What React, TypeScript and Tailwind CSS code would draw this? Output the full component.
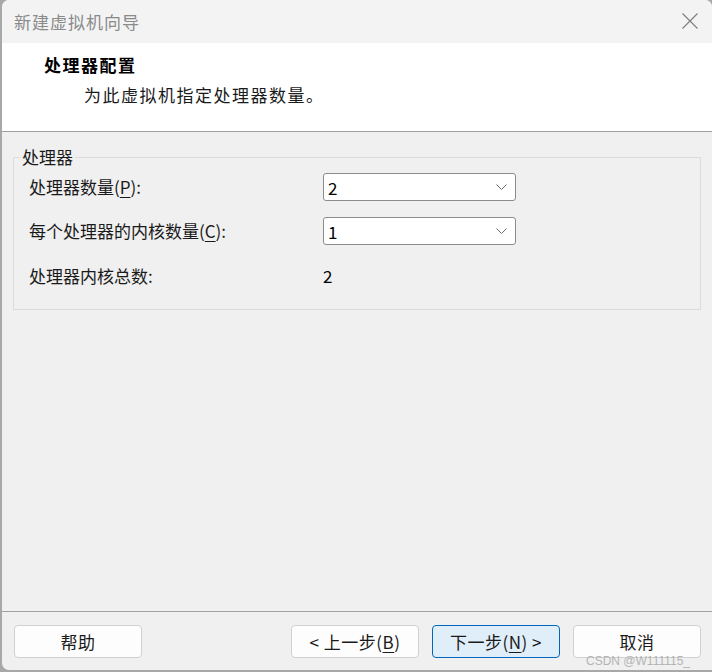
const font = '[font-family:"Microsoft_YaHei","Noto_Sans_CJK_SC",sans-serif]';

function Chevron() {
  return (
    <svg width="11" height="6" viewBox="0 0 11 6" fill="none" className="shrink-0">
      <path d="M0.5 0.5 L5.5 5.5 L10.5 0.5" stroke="#6b6b6b" strokeWidth="1" />
    </svg>
  );
}

function Select({ value }: { value: string }) {
  return (
    <div className="flex h-[28px] w-[193px] items-center justify-between rounded-[3px] border border-[#8c8c8c] bg-white pl-[4px] pr-[8px]">
      <span className="text-[17px] leading-none text-black">{value}</span>
      <Chevron />
    </div>
  );
}

function Label({ text, mnemonic }: { text: string; mnemonic?: string }) {
  return (
    <span className="text-[17px] leading-[24px] text-[#1a1a1a]">
      {text}
      {mnemonic && (
        <>
          (<span className="underline underline-offset-[3px]">{mnemonic}</span>)
        </>
      )}
      :
    </span>
  );
}

function Button({ children, primary }: { children: React.ReactNode; primary?: boolean }) {
  return (
    <button
      className={`flex h-[33px] w-[128px] items-center justify-center rounded-[4px] border text-[17px] tracking-[0.5px] text-[#1a1a1a] ${
        primary ? 'border-[#0067c0] bg-[#e0eef9]' : 'border-[#d0d0d0] bg-[#fdfdfd]'
      }`}
    >
      {children}
    </button>
  );
}

export default function App() {
  return (
    <div className={`h-[672px] w-[712px] overflow-hidden bg-[#a8a8a8] ${font}`}>
      <div className="relative ml-[2px] flex h-[670px] flex-col overflow-hidden rounded-t-[7px] rounded-bl-[7px] bg-[#f0f0f0]">
        {/* Title bar */}
        <div className="flex h-[43px] shrink-0 items-center justify-between bg-[#f3f3f3] pl-[12px] pr-[14px]">
          <span className="text-[17px] tracking-[1px] text-[#8a8a8a]">新建虚拟机向导</span>
          <svg width="16" height="16" viewBox="0 0 16 16" className="mt-[-2px]">
            <path d="M0.5 0.5 L15.5 15.5 M15.5 0.5 L0.5 15.5" stroke="#7c7c7c" strokeWidth="1.1" />
          </svg>
        </div>

        {/* Header */}
        <div className="h-[89px] shrink-0 border-b border-[#a0a0a0] bg-white pl-[42px] pt-[10px]">
          <div className="text-[17px] font-bold leading-[24px] tracking-[1.5px] text-black">处理器配置</div>
          <div className="mt-[6px] pl-[40px] text-[17px] leading-[24px] tracking-[1.5px] text-[#1a1a1a]">
            为此虚拟机指定处理器数量。
          </div>
        </div>

        {/* Body */}
        <div className="flex-1 px-[11px] pt-[13px]">
          <fieldset className="border border-[#dcdcdc] pb-[21px]">
            <legend className="ml-[6px] px-[2px] text-[17px] leading-[24px] text-[#1a1a1a]">
              处理器
            </legend>
            <div className="grid grid-cols-[294px_1fr] items-center gap-y-[16px] pl-[15px] pt-[4px]">
              <Label text="处理器数量" mnemonic="P" />
              <Select value="2" />
              <Label text="每个处理器的内核数量" mnemonic="C" />
              <Select value="1" />
              <div className="mt-[3px]">
                <Label text="处理器内核总数" />
              </div>
              <span className="mt-[3px] text-[17px] leading-[24px] text-black">2</span>
            </div>
          </fieldset>
        </div>

        {/* Footer */}
        <div className="h-[59px] shrink-0 border-t border-[#a0a0a0] pl-[12px] pr-[11px] pt-[13px]">
          <div className="flex items-center">
            <Button>帮助</Button>
            <div className="ml-auto flex gap-[13px]">
              <Button>
                &lt; 上一步(<span className="underline underline-offset-[3px]">B</span>)
              </Button>
              <Button primary>
                下一步(<span className="underline underline-offset-[3px]">N</span>) &gt;
              </Button>
              <Button>取消</Button>
            </div>
          </div>
        </div>

        <span className="absolute bottom-[3px] right-[22px] text-[12px] leading-none text-[#b4b4b4] [font-family:'Liberation_Sans',sans-serif]">
          CSDN @W111115_
        </span>
      </div>
    </div>
  );
}
